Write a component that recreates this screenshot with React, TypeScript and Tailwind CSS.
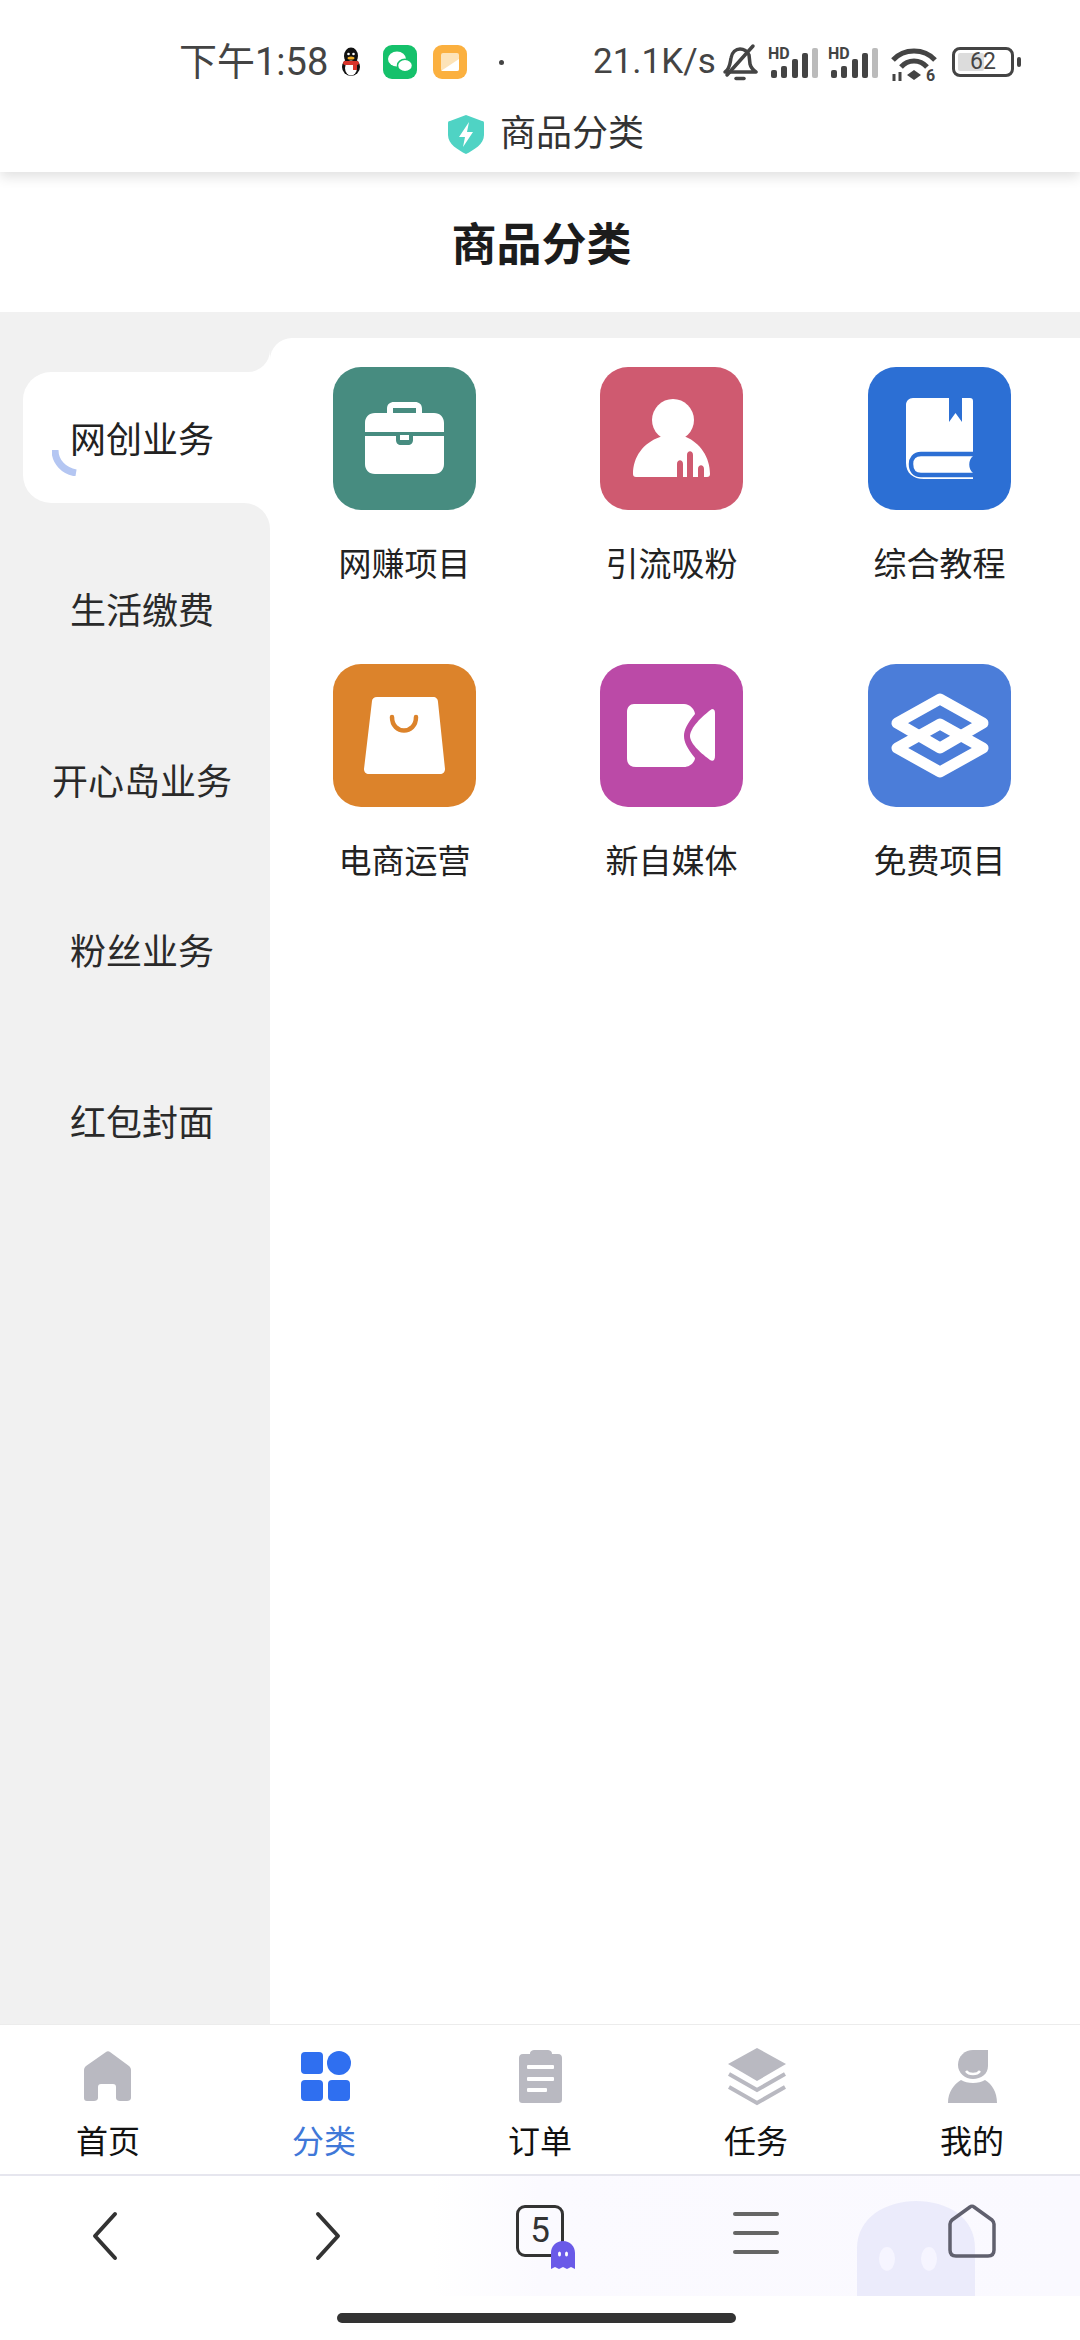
import React from "react";

const cjk = { fontFamily: '"Roboto","Noto Sans CJK SC",sans-serif' };

function Tile({ bg, label, children }: { bg: string; label: string; children: React.ReactNode }) {
  return (
    <div className="flex flex-col items-center">
      <div className={`w-[143px] h-[143px] rounded-[28px] ${bg}`}>
        <svg viewBox="0 0 143 143" className="w-full h-full block">{children}</svg>
      </div>
      <div className="mt-[34px] text-[33px] leading-[42px] text-[#222] whitespace-nowrap">{label}</div>
    </div>
  );
}

function Signal() {
  return (
    <svg viewBox="0 0 50 34" className="w-[50px] h-[34px] block overflow-visible">
      <text x="0" y="13" fontSize="16" fontWeight="700" fill="#444" fontFamily="Roboto">HD</text>
      <rect x="3" y="24" width="6" height="8" rx="2" fill="#444" />
      <rect x="13" y="20" width="6" height="12" rx="2" fill="#444" />
      <rect x="24" y="13" width="6" height="19" rx="2" fill="#444" />
      <rect x="34" y="7" width="6" height="25" rx="2" fill="#444" />
      <rect x="44" y="2" width="6" height="30" rx="2" fill="#bbb" />
    </svg>
  );
}

function TabItem({ label, active, children }: { label: string; active?: boolean; children: React.ReactNode }) {
  return (
    <div className="flex-1 flex flex-col items-center">
      <svg viewBox="0 0 70 70" className="w-[70px] h-[70px] block" fill="#b9b9c1">{children}</svg>
      <div className={`mt-[14px] text-[32px] leading-[40px] ${active ? "text-[#3f78d8]" : "text-[#111]"}`}>{label}</div>
    </div>
  );
}

export default function App() {
  const items = ["生活缴费", "开心岛业务", "粉丝业务", "红包封面"];
  return (
    <div className="w-[1080px] h-[2340px] flex flex-col bg-white overflow-hidden" style={cjk}>
      {/* system status */}
      <div className="h-[172px] shrink-0 relative z-10 bg-white shadow-[0_5px_12px_rgba(0,0,0,0.12)]">
        <div className="h-[100px] pt-[43px] pl-[179px] flex items-start text-[#444]">
          <span className="text-[38px] leading-[38px] w-[160px] whitespace-nowrap">下午1:58</span>
          <svg viewBox="0 0 24 30" className="w-[24px] h-[30px] mt-[4px] block">
            <ellipse cx="12" cy="9" rx="7" ry="8.5" fill="#111" />
            <ellipse cx="12" cy="20" rx="9" ry="9" fill="#111" />
            <ellipse cx="12" cy="21" rx="6" ry="7.5" fill="#fff" />
            <rect x="4" y="14" width="16" height="4" rx="2" fill="#d8352b" />
            <rect x="14" y="15" width="4" height="8" fill="#d8352b" />
            <circle cx="9.5" cy="7" r="1.3" fill="#fff" />
            <circle cx="14.5" cy="7" r="1.3" fill="#fff" />
            <ellipse cx="12" cy="11" rx="3.5" ry="1.6" fill="#f4b024" />
          </svg>
          <svg viewBox="0 0 34 34" className="w-[34px] h-[34px] ml-[20px] mt-[2px] block">
            <rect width="34" height="34" rx="9" fill="#15c16b" />
            <ellipse cx="14" cy="14" rx="9" ry="7.5" fill="#fff" />
            <ellipse cx="22" cy="20.5" rx="7.5" ry="6.2" fill="#fff" stroke="#15c16b" strokeWidth="1.5" />
          </svg>
          <svg viewBox="0 0 34 34" className="w-[34px] h-[34px] ml-[16px] mt-[2px] block">
            <rect width="34" height="34" rx="9" fill="#fbb03f" />
            <rect x="8" y="8" width="18" height="18" rx="2" fill="#fde3b8" />
            <path d="M8 26 L26 14 V24 a2 2 0 0 1 -2 2 Z" fill="#fff" />
          </svg>
          <div className="w-[5px] h-[5px] rounded-full bg-[#444] ml-[32px] mt-[17px]" />
          <span className="text-[35px] leading-[38px] ml-[89px] w-[129px] whitespace-nowrap">21.1K/s</span>
          <svg viewBox="0 0 36 38" className="w-[36px] h-[38px] block" fill="none" stroke="#444" strokeWidth="3.5" strokeLinecap="round" strokeLinejoin="round">
            <path d="M3 29 C8 26 8 20 9 15 C10 9 14 6 18 6 C22 6 25 8 27 12 L28 21 C29 25 31 27 34 29 Z" />
            <path d="M31 3 L5 32" />
            <path d="M14 35.5 H22" />
          </svg>
          <div className="ml-[10px] mt-[3px]"><Signal /></div>
          <div className="ml-[10px] mt-[3px]"><Signal /></div>
          <svg viewBox="0 0 48 36" className="w-[48px] h-[36px] ml-[12px] mt-[3px] block overflow-visible" fill="none" stroke="#444" strokeWidth="5" strokeLinecap="butt">
            <path d="M3 14 C14 2 34 2 45 14" />
            <path d="M11 21 C18 13 30 13 37 21" />
            <path d="M24 24 L31 29 L24 34 L17 29 Z" fill="#444" stroke="none" />
            <path d="M4 28 V35 M10 26 V35" strokeWidth="3" />
            <text x="36" y="35" fontSize="16" fontWeight="700" fill="#444" stroke="none" fontFamily="Roboto">6</text>
          </svg>
          <div className="ml-[14px] mt-[4px] flex items-center">
            <div className="relative w-[62px] h-[30px] rounded-[8px] border-[3px] border-[#444] p-[3px]">
              <div className="h-full w-[52%] bg-[#dcdcdc] rounded-[2px]" />
              <span className="absolute inset-0 text-center text-[23px] leading-[24px] text-[#444]">62</span>
            </div>
            <div className="w-[4px] h-[10px] rounded-[2px] bg-[#444] ml-[3px]" />
          </div>
        </div>
        <div className="flex items-center pl-[448px] mt-[14px]">
          <svg viewBox="0 0 36 40" className="w-[36px] h-[40px] block">
            <path d="M18 1 L34 7 C36 7 36 8 36 10 V21 C36 30 26 36 18 40 C10 36 0 30 0 21 V10 C0 8 0 7 2 7 Z" fill="#4fd3c4" />
            <path d="M21 8 L11 23 H17 L15 33 L25 18 H19 Z" fill="#fff" />
          </svg>
          <span className="ml-[16px] text-[36px] leading-[40px] text-[#333]">商品分类</span>
        </div>
      </div>

      {/* page header */}
      <div className="h-[140px] shrink-0 flex items-center justify-center bg-white">
        <span className="text-[45px] font-bold text-[#1c1c1c] ml-[3px] mt-[8px]">商品分类</span>
      </div>

      {/* body */}
      <div className="flex-1 flex bg-[#f1f1f1] min-h-0">
        <div className="w-[270px] bg-white flex flex-col">
          <div className="h-[60px] bg-[#f1f1f1] rounded-br-[22px]" />
          <div className="h-[131px] bg-[#f1f1f1] pl-[23px]">
            <div className="relative h-full bg-white rounded-l-[28px] flex items-center justify-center pr-[9px]">
              <span className="text-[36px] text-[#222] mt-[6px]">网创业务</span>
              <svg viewBox="0 0 26 26" className="absolute left-[29px] top-[78px] w-[26px] h-[26px]" fill="none" stroke="#b4c6f2" strokeWidth="7">
                <path d="M3 0 C3 12 12 21 24 23" />
              </svg>
            </div>
          </div>
          <div className="flex-1 bg-[#f1f1f1] rounded-tr-[26px] pt-[64px]">
            {items.map((t) => (
              <div key={t} className="h-[170.5px] pl-[14px] text-center text-[36px] leading-[90px] text-[#2a2a2a]">
                {t}
              </div>
            ))}
          </div>
        </div>
        <div className="flex-1 bg-white mt-[26px] rounded-tl-[22px] pt-[29px] pl-[63px]">
          <div className="grid grid-cols-[267px_268px_143px] gap-y-[78px] w-[678px] [&>div]:w-[143px]">
            <Tile bg="bg-[#478c80]" label="网赚项目">
              <g fill="#fff">
                <path fillRule="evenodd" d="M54 46 V42 C54 37 57 35 61 35 H82 C86 35 89 37 89 42 V46 H101 C107 46 111 50 111 56 V65 H32 V56 C32 50 36 46 42 46 Z M60 46 H83 V41 H60 Z" />
                <path d="M32 69 H63 V73 C63 76 65 78 68 78 H75 C78 78 80 76 80 73 V69 H111 V97 C111 103 107 107 101 107 H42 C36 107 32 103 32 97 Z" />
                <rect x="67" y="68" width="9" height="5" />
              </g>
            </Tile>
            <Tile bg="bg-[#cf5a70]" label="引流吸粉">
              <g fill="#fff">
                <circle cx="73" cy="53" r="21" />
                <path d="M33 107 C33 90 43 76 60 70 H86 C100 76 110 90 110 107 C110 109 109 110 107 110 H104 V102 C104 97 98 97 98 102 V110 H93 V88 C93 83 87 83 87 88 V110 H83 V97 C83 92 77 92 77 97 V110 H36 C34 110 33 109 33 107 Z" />
              </g>
            </Tile>
            <Tile bg="bg-[#2c6fd4]" label="综合教程">
              <path d="M45 31 H81 V55 L87.5 46 L94 55 V31 H102 C104 31 105 32 105 34 V112 H56 C45 112 38 106 38 96 V38 C38 34 41 31 45 31 Z" fill="#fff" />
              <path d="M105 87 H53 C46 87 43 92 43 97 C43 103 46 108 53 108 H105" fill="none" stroke="#2c6fd4" strokeWidth="4.5" />
              <path d="M105 89 C100 93 100 102 105 106 Z" fill="#2c6fd4" />
            </Tile>
            <Tile bg="bg-[#dc832b]" label="电商运营">
              <path d="M39 37 C39 35 41 33 44 33 H100 C103 33 105 35 105 38 L112 105 C112 108 110 110 107 110 H36 C33 110 31 108 31 105 Z" fill="#fff" />
              <path d="M59 53 C59 71 83 71 83 53" fill="none" stroke="#dc832b" strokeWidth="4.5" strokeLinecap="round" />
            </Tile>
            <Tile bg="bg-[#bb4aa7]" label="新自媒体">
              <path d="M34 40 H84 C90 40 95 46 95 50 C87 60 84 66 84 72 C84 78 87 84 95 94 C95 98 90 103 84 103 H36 C30 103 27 100 27 94 V48 C27 43 30 40 34 40 Z" fill="#fff" />
              <path d="M112 45 C115 45 115 48 115 50 V92 C115 96 113 98 110 96 C102 90 90 80 90 72 C90 64 102 52 112 45 Z" fill="#fff" />
            </Tile>
            <Tile bg="bg-[#4b7dd9]" label="免费项目">
              <g fill="none" stroke="#fff" strokeWidth="11" strokeLinejoin="round">
                <path d="M72 35 L29 59 L72 84 L115 59 Z" />
                <path d="M72 60 L29 84 L72 108 L115 84 Z" />
              </g>
            </Tile>
          </div>
        </div>
      </div>

      {/* tab bar */}
      <div className="h-[152px] shrink-0 border-t border-[#ececec] border-b-2 border-b-[#e6e6ee] bg-white flex pt-[13px]">
        <TabItem label="首页">
          <path d="M33 14 C34 13 36 13 37 14 L56 28 C57 29 58 30 58 32 V60 C58 62 56 63 54 63 H47 C45 63 43 62 43 60 V49 C43 47 42 46 40 46 H28 C26 46 25 47 25 49 V60 C25 62 23 63 21 63 H14 C12 63 11 62 11 60 V32 C11 30 12 29 13 28 Z" />
        </TabItem>
        <TabItem label="分类" active>
          <g fill="#2f6ff0">
            <rect x="12" y="14" width="22" height="22" rx="4" />
            <circle cx="50" cy="25" r="12" />
            <rect x="12" y="42" width="22" height="21" rx="4" />
            <rect x="39" y="42" width="22" height="21" rx="4" />
          </g>
        </TabItem>
        <TabItem label="订单">
          <path d="M18 16 H25 C25 13 27 12 30 12 H42 C45 12 47 13 47 16 H53 C56 16 57 18 57 20 V61 C57 64 56 65 53 65 H18 C15 65 14 64 14 61 V20 C14 18 15 16 18 16 Z" />
          <rect x="22" y="27" width="27" height="4" rx="1" fill="#fff" />
          <rect x="22" y="39" width="27" height="4" rx="1" fill="#fff" />
          <rect x="22" y="50" width="20" height="4" rx="1" fill="#fff" />
        </TabItem>
        <TabItem label="任务">
          <path d="M36 10 L65 26 L36 43 L7 26 Z" />
          <path d="M8 36 L36 52 L64 36" fill="none" stroke="#b9b9c1" strokeWidth="4" />
          <path d="M8 49 L36 65 L64 49" fill="none" stroke="#b9b9c1" strokeWidth="4" />
        </TabItem>
        <TabItem label="我的">
          <path d="M36 12 H51 V28 C51 36 44 41 36 41 C28 41 21 35 21 27 C21 18 28 12 36 12 Z" />
          <path d="M29 33 C32 37 40 37 43 33" fill="none" stroke="#fff" strokeWidth="2.5" />
          <path d="M24 42 C30 46 42 46 48 42 C55 46 60 54 60 65 H11 C11 54 17 46 24 42 Z" />
        </TabItem>
      </div>

      {/* browser bar */}
      <div className="h-[120px] shrink-0 relative flex items-center bg-gradient-to-r from-white from-40% via-[#fbfaff] to-[#faf9ff]">
        <svg viewBox="0 0 118 120" className="absolute left-[857px] top-[25px] w-[118px] h-[95px]" preserveAspectRatio="none">
          <path d="M0 120 V60 C0 20 30 0 59 0 C90 0 118 20 118 60 V120 Z" fill="#ebebfb" />
          <ellipse cx="30" cy="73" rx="8" ry="15" fill="#f6f5ff" />
          <ellipse cx="72" cy="73" rx="8" ry="15" fill="#f6f5ff" />
        </svg>
        <div className="relative flex-1 flex justify-center">
          <svg viewBox="0 0 28 50" className="w-[28px] h-[50px] block mr-[6px]" fill="none" stroke="#333" strokeWidth="4" strokeLinecap="round" strokeLinejoin="round"><path d="M24 3 L4 25 L24 47" /></svg>
        </div>
        <div className="relative flex-1 flex justify-center">
          <svg viewBox="0 0 28 50" className="w-[28px] h-[50px] block ml-[8px]" fill="none" stroke="#333" strokeWidth="4" strokeLinecap="round" strokeLinejoin="round"><path d="M4 3 L24 25 L4 47" /></svg>
        </div>
        <div className="relative flex-1 flex justify-center">
          <div className="relative w-[48px] h-[52px] border-[3px] border-[#333] rounded-[9px] -mt-[10px] text-center text-[35px] leading-[46px] text-[#333]">
            5
            <svg viewBox="0 0 24 28" className="absolute -right-[14px] -bottom-[15px] w-[24px] h-[28px]">
              <path d="M0 28 V12 C0 5 5 0 12 0 C19 0 24 5 24 12 V28 L20 26 L16 28 L12 26 L8 28 L4 26 Z" fill="#6a5ae8" />
              <ellipse cx="8.5" cy="13" rx="1.5" ry="2.5" fill="#fff" />
              <ellipse cx="15.5" cy="13" rx="1.5" ry="2.5" fill="#fff" />
            </svg>
          </div>
        </div>
        <div className="relative flex-1 flex flex-col items-center gap-[15px] -mt-[6px]">
          <div className="w-[46px] h-[4px] rounded-full bg-[#666]" />
          <div className="w-[46px] h-[4px] rounded-full bg-[#666]" />
          <div className="w-[46px] h-[4px] rounded-full bg-[#666]" />
        </div>
        <div className="relative flex-1 flex justify-center">
          <svg viewBox="0 0 50 54" className="w-[50px] h-[54px] block -mt-[10px]" fill="none" stroke="#60606e" strokeWidth="3.5" strokeLinejoin="round"><path d="M23 3 C24 2 26 2 27 3 L45 16 C46 17 47 18 47 20 V46 C47 50 45 52 41 52 H9 C5 52 3 50 3 46 V20 C3 18 4 17 5 16 Z" /></svg>
        </div>
      </div>

      {/* home indicator */}
      <div className="h-[44px] shrink-0 bg-white pt-[17px] pl-[337px]">
        <div className="w-[399px] h-[10px] rounded-full bg-[#333]" />
      </div>
    </div>
  );
}
